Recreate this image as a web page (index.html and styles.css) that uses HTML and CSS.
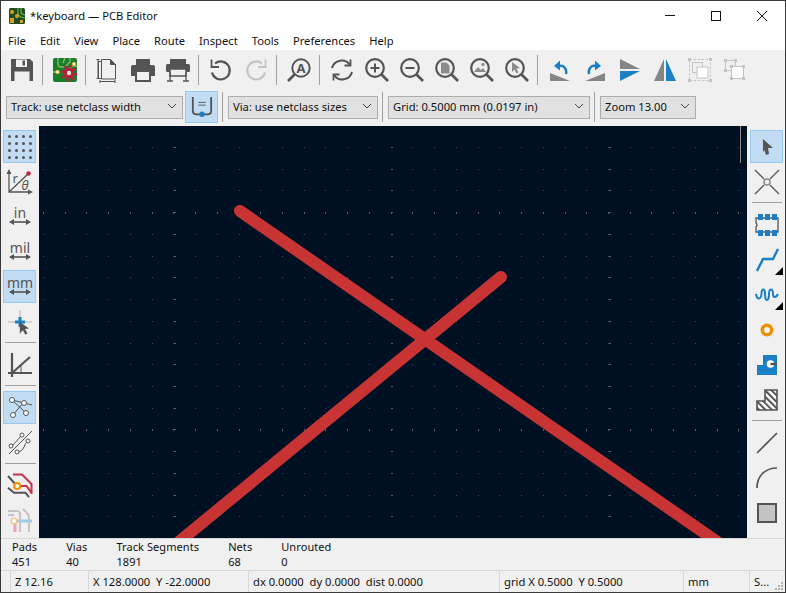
FILE: index.html
```html
<!DOCTYPE html>
<html lang="en">
<head>
  <meta charset="UTF-8">
  <title>*keyboard — PCB Editor</title>
  <link rel="stylesheet" href="styles.css">
</head>
<body>
<div class="window">

  <div class="titlebar">
    <svg class="app-icon" viewBox="0 0 16 16">
      <rect width="16" height="16" rx="1.5" fill="#1f4d1f"/>
      <path d="M9 0v5q0 3 3 4l4 1M12 0v4q0 2 4 3" fill="none" stroke="#66b34d" stroke-width="1.2"/>
      <circle cx="3" cy="4" r="2" fill="#d9a020"/>
      <circle cx="8" cy="8" r="2" fill="#d9a020"/>
      <rect x="1" y="10" width="4" height="5" fill="#d9a020"/>
      <rect x="11" y="12" width="3" height="3" fill="#d9a020"/>
    </svg>
    <span class="title">*keyboard — PCB Editor</span>
    <div class="win-buttons">
      <svg viewBox="0 0 46 29"><path d="M18 14.5h10" stroke="#111" fill="none"/></svg>
      <svg viewBox="0 0 46 29"><rect x="18.500" y="10.500" width="9" height="9" stroke="#111" fill="none"/></svg>
      <svg viewBox="0 0 46 29"><path d="M18 10l10 10M28 10l-10 10" stroke="#111" fill="none"/></svg>
    </div>
  </div>

  <div class="menubar">
    <span>File</span><span>Edit</span><span>View</span><span>Place</span><span>Route</span>
    <span>Inspect</span><span>Tools</span><span>Preferences</span><span>Help</span>
  </div>

  <div class="toolbar">
    <div class="tool"><svg class="icon" viewBox="0 0 24 24"><path d="M1 1h19l3 3v19H1z" fill="#545454"/><rect x="6" y="1.500" width="11" height="7.500" fill="#f0f0f0"/><rect x="12.500" y="2.500" width="2.500" height="5" fill="#545454"/><rect x="4.500" y="13.500" width="15" height="9.500" fill="#f0f0f0"/></svg></div>
    <i class="sep"></i>
    <div class="tool"><svg class="icon" viewBox="0 0 24 24"><rect width="24" height="24" rx="2" fill="#1b7d2c"/><path d="M5 0v6q0 3 3 3h4l5-5V0M0 14h4M12 0l-2 5M24 8h-5l-3 3" fill="none" stroke="#7cc464" stroke-width="1.300"/><circle cx="4.500" cy="14" r="1.800" fill="#fff" stroke="#e9a41e"/><circle cx="21" cy="6" r="1.800" fill="#fff" stroke="#e9a41e"/><circle cx="16" cy="15" r="5.500" fill="#b5213d"/><circle cx="16" cy="15" r="7" fill="none" stroke="#b5213d" stroke-width="2.400" stroke-dasharray="2.700 2.800"/><circle cx="16" cy="15" r="2.200" fill="#d8e8d0"/></svg></div>
    <i class="sep"></i>
    <div class="tool shift-l"><svg class="icon" viewBox="0 0 24 24" fill="none" stroke="#545454"><path d="M7.500 1.500h9l5 5v14.500h-14zM7.500 3.500h-3v17h3"/><path d="M16.500 1.500l5 5h-5z" fill="#545454"/><path d="M2.500 1.500h3M2.500 20.500h3M4 20.500v-19M6 23.500h15M6 22v3M21 22v3" stroke-width="1"/></svg></div>
    <div class="tool"><svg class="icon" viewBox="0 0 24 24"><rect x="5" y="1" width="14" height="6" fill="#545454"/><path d="M0 9q0-2 2-2h20q2 0 2 2v9h-24z" fill="#545454"/><rect x="5" y="13" width="14" height="10" fill="#f0f0f0" stroke="#545454" stroke-width="2"/></svg></div>
    <div class="tool"><svg class="icon" viewBox="0 0 24 24"><rect x="4" y="1" width="16" height="5" fill="#545454"/><rect y="6" width="24" height="8" rx="1.500" fill="#545454"/><rect x="4" y="11" width="16" height="7" fill="#f0f0f0" stroke="#545454" stroke-width="1.500"/><path d="M4 14v9M20 14v9M1 23h6M17 23h6" stroke="#545454" fill="none" stroke-width="1.300"/></svg></div>
    <i class="sep"></i>
    <div class="tool"><svg class="icon" viewBox="0 0 24 24" fill="none" stroke="#545454" stroke-width="2.200"><path d="M6 5.500a9 9 0 1 1-3 9"/><path d="M2.500 1.500v7.500h7.500" stroke-width="1.800"/></svg></div>
    <div class="tool"><svg class="icon" viewBox="0 0 24 24" fill="none" stroke="#c4c4c4" stroke-width="2.200"><path d="M18 5.500a9 9 0 1 0 3 9"/><path d="M21.500 1.500v7.500h-7.500" stroke-width="1.800"/></svg></div>
    <i class="sep"></i>
    <div class="tool"><svg class="icon" viewBox="0 0 24 24"><circle cx="14" cy="10" r="8.700" fill="none" stroke="#545454" stroke-width="2"/><path d="M8 16l-7 7" stroke="#545454" stroke-width="2.600"/><text x="14" y="14.500" class="svg-a">A</text></svg></div>
    <i class="sep"></i>
    <div class="tool"><svg class="icon" viewBox="0 0 24 24" fill="none" stroke="#545454" stroke-width="2"><path d="M2 10a10 10 0 0 1 18-3M22 14a10 10 0 0 1-18 3"/><path d="M20.500 1.500v6h-6M3.500 22.500v-6h6" stroke-width="1.800"/></svg></div>
    <div class="tool"><svg class="icon" viewBox="0 0 24 24"><use href="#lens"/><path d="M10 5.500v9M5.500 10h9" stroke="#545454" stroke-width="2"/></svg></div>
    <div class="tool"><svg class="icon" viewBox="0 0 24 24"><use href="#lens"/><path d="M5.500 10h9" stroke="#545454" stroke-width="2"/></svg></div>
    <div class="tool"><svg class="icon" viewBox="0 0 24 24"><use href="#lens"/><path d="M6 4.500h5.500l3 3v8h-8.500z" fill="#8c8c8c"/></svg></div>
    <div class="tool"><svg class="icon" viewBox="0 0 24 24"><use href="#lens"/><path d="M4 14l4-5 3 3 2-2 3 4z" fill="#8c8c8c"/><circle cx="13" cy="6.500" r="1.700" fill="#8c8c8c"/></svg></div>
    <div class="tool"><svg class="icon" viewBox="0 0 24 24"><use href="#lens"/><path d="M7 4l8 6-3.500.5 2 4-2 1-2-4-2.500 2.500z" fill="#8c8c8c"/></svg></div>
    <i class="sep"></i>
    <div class="tool"><svg class="icon" viewBox="0 0 24 24"><path d="M2 15l20 8h-20z" fill="#858585"/><path d="M18 16c1-5-2-9-7-8" fill="none" stroke="#1a7fc4" stroke-width="2.500"/><path d="M12 2.500l-6 5.500 6 4.500z" fill="#1a7fc4"/></svg></div>
    <div class="tool"><svg class="icon" viewBox="0 0 24 24"><path d="M22 15l-20 8h20z" fill="#858585"/><path d="M6 16c-1-5 2-9 7-8" fill="none" stroke="#1a7fc4" stroke-width="2.500"/><path d="M12 2.500l6 5.500-6 4.500z" fill="#1a7fc4"/></svg></div>
    <div class="tool"><svg class="icon" viewBox="0 0 24 24"><path d="M2 1l20 10h-20z" fill="#858585"/><path d="M2 13h20l-20 10z" fill="#1a7fc4"/></svg></div>
    <div class="tool"><svg class="icon" viewBox="0 0 24 24"><path d="M11 1l-10 22h10z" fill="#858585"/><path d="M13 1l10 22h-10z" fill="#1a7fc4"/></svg></div>
    <div class="tool"><svg class="icon" viewBox="0 0 24 24"><rect x="1.500" y="1.500" width="21" height="21" fill="none" stroke="#c4c4c4" stroke-dasharray="2.500 1.500"/><rect x="0" y="0" width="3" height="3" fill="#c4c4c4"/><rect x="21" y="0" width="3" height="3" fill="#c4c4c4"/><rect x="0" y="21" width="3" height="3" fill="#c4c4c4"/><rect x="21" y="21" width="3" height="3" fill="#c4c4c4"/><rect x="4.500" y="4.500" width="10" height="10" fill="none" stroke="#c4c4c4"/><rect x="9" y="9" width="11" height="11" fill="#fff" stroke="#c4c4c4"/></svg></div>
    <div class="tool"><svg class="icon" viewBox="0 0 24 24"><rect x="2.500" y="2.500" width="10" height="10" fill="none" stroke="#c4c4c4"/><rect x="8.500" y="8.500" width="12" height="12" fill="#fff" stroke="#c4c4c4"/><g fill="#c4c4c4"><rect x="1" y="1" width="3" height="3"/><rect x="11" y="1" width="3" height="3"/><rect x="1" y="11" width="3" height="3"/><rect x="7" y="7" width="3" height="3"/><rect x="19" y="7" width="3" height="3"/><rect x="7" y="19" width="3" height="3"/><rect x="19" y="19" width="3" height="3"/></g></svg></div>
  </div>

  <div class="optionbar">
    <div class="combo track-w">Track: use netclass width<svg viewBox="0 0 10 6"><path d="M1 1l4 4 4-4" fill="none" stroke="#444"/></svg></div>
    <div class="opt-btn"><svg class="icon" viewBox="0 0 24 24"><path d="M2 1v15q0 4 4 4h12q4 0 4-4v-15" fill="none" stroke="#545454" stroke-width="2"/><path d="M8 7h8M8 10h8" stroke="#545454"/><circle cx="12" cy="20" r="3" fill="#1a7fc4"/></svg></div>
    <i class="sep-h"></i>
    <div class="combo via-w">Via: use netclass sizes<svg viewBox="0 0 10 6"><path d="M1 1l4 4 4-4" fill="none" stroke="#444"/></svg></div>
    <i class="sep-h"></i>
    <div class="combo grid-w">Grid: 0.5000 mm (0.0197 in)<svg viewBox="0 0 10 6"><path d="M1 1l4 4 4-4" fill="none" stroke="#444"/></svg></div>
    <i class="sep-h"></i>
    <div class="combo zoom-w">Zoom 13.00<svg viewBox="0 0 10 6"><path d="M1 1l4 4 4-4" fill="none" stroke="#444"/></svg></div>
  </div>

  <div class="workarea">
    <div class="sidebar">
      <div class="tool on"><svg class="icon" viewBox="0 0 24 24"><path d="M1.500 1.500h24M1.500 8.500h24M1.500 15.500h24M1.500 22.500h24" stroke="#545454" stroke-width="3" stroke-linecap="round" stroke-dasharray="0 7" fill="none"/></svg></div>
      <div class="tool"><svg class="icon" viewBox="0 0 24 24"><path d="M1 2v20h22M1 22L20 4" fill="none" stroke="#545454" stroke-width="1.300"/><path d="M1 -1l-2.500 5h5zM25 22l-5-2.500v5z" fill="#545454"/><circle cx="20.500" cy="3.500" r="2.200" fill="#c8203c"/><text x="4.500" y="13" class="svg-small">r</text><text x="13.500" y="20" class="svg-theta">θ</text></svg></div>
      <div class="tool"><svg class="icon" viewBox="0 0 24 24"><text x="12" y="12.500" class="svg-unit">in</text><use href="#unit-arrow"/></svg></div>
      <div class="tool"><svg class="icon" viewBox="0 0 24 24"><text x="12" y="12.500" class="svg-unit">mil</text><use href="#unit-arrow"/></svg></div>
      <div class="tool on"><svg class="icon" viewBox="0 0 24 24"><text x="12" y="12.500" class="svg-unit">mm</text><use href="#unit-arrow"/></svg></div>
      <div class="tool"><svg class="icon" viewBox="0 0 24 24"><path d="M12 0v24M0 12h24" stroke="#b4b4b4"/><path d="M12 7v10M7 12h10" stroke="#1a7fc4" stroke-width="3"/><path d="M12 12l9 6.500-4 .5 2.500 4.500-2.200 1.200-2.300-4.500-3 2.800z" fill="#545454"/></svg></div>
      <i class="sep-v"></i>
      <div class="tool"><svg class="icon" viewBox="0 0 24 24" fill="none" stroke="#545454"><path d="M4 0v24M0 20h24" stroke-width="2.200"/><path d="M4 20l18-16" stroke-width="2.200"/><path d="M13 13v7" stroke-width="1"/></svg></div>
      <i class="sep-v"></i>
      <div class="tool on"><svg class="icon" viewBox="0 0 24 24"><path d="M4 4l20 5M4 4l14 13M15 7L5 19" fill="none" stroke="#545454"/><g fill="#fff" stroke="#545454"><circle cx="4" cy="4" r="2.500"/><circle cx="16" cy="7" r="2.500"/><circle cx="18" cy="17" r="2.500"/><circle cx="5" cy="19" r="2.500"/></g></svg></div>
      <div class="tool"><svg class="icon" viewBox="0 0 24 24"><path d="M1 23L24 0M8 21q6 0 8-5 1-4 4-6M4 15L14 4" fill="none" stroke="#545454"/><g fill="#fff" stroke="#545454"><circle cx="3" cy="15" r="2"/><circle cx="14" cy="4" r="2"/><circle cx="20" cy="10" r="2"/><circle cx="9" cy="21" r="2"/></g></svg></div>
      <i class="sep-v"></i>
      <div class="tool"><svg class="icon" viewBox="0 0 24 24" fill="none" stroke-width="2"><path d="M5 .500h9l9.500 9.500v10M12.500 12h6l5 7" stroke="#c8304c"/><path d="M0 2l9 10M0 13.700l6 5h11.500l3.500 4.500" stroke="#545454"/><circle cx="9.200" cy="12" r="3" fill="#fff" stroke="#f09000" stroke-width="2.200"/></svg></div>
      <div class="tool"><svg class="icon" viewBox="0 0 24 24" fill="none" stroke-width="2"><path d="M0 2h9q3 0 3 3v18" stroke="#c4c4c4"/><path d="M15 0l4 4q2 2 2 5v14M0 6h6" stroke="#c4c4c4"/><path d="M7 12v11" stroke="#e8a6b0" stroke-width="3"/><path d="M8 12h16" stroke="#a0cce8" stroke-width="3"/><circle cx="6" cy="12" r="2.800" fill="#fff" stroke="#f0c890" stroke-width="1.600"/></svg></div>
    </div>

    <svg class="canvas" viewBox="0 0 708 412">
      <path class="dots minor" d="M4 21.500H708M4 43.500H708M4 64.500H708M4 108.500H708M4 130.500H708M4 151.500H708M4 173.500H708M4 195.500H708M4 217.500H708M4 238.500H708M4 260.500H708M4 282.500H708M4 325.500H708M4 347.500H708M4 369.500H708M4 390.500H708"/>
      <path class="dots major-row" d="M4 87H708M4 304H708"/>
      <path class="dots major-col" d="M136 21V412M353 21V412M571 21V412"/>
      <path d="M201 85L690 424M462 151L130 424" stroke="#c83434" stroke-width="12" stroke-linecap="round" fill="none"/>
      <path d="M701.500 0v37" stroke="#8c8c8c"/>
    </svg>

    <div class="sidebar right">
      <div class="tool on"><svg class="icon" viewBox="0 0 24 24"><path d="M8 4L18 13h-5l1 6-3 1-1.500-5-1.500 2z" fill="#545454"/></svg></div>
      <div class="tool"><svg class="icon" viewBox="0 0 24 24"><path d="M0 0l9 9M24 0l-9 9M0 24l9-9M24 24l-9-9" stroke="#545454" stroke-width="1.300"/><circle cx="12" cy="12" r="3" fill="none" stroke="#8c8c8c" stroke-width="1.500"/></svg></div>
      <i class="sep-v"></i>
      <div class="tool"><svg class="icon" viewBox="0 0 24 24"><path d="M1 5h22v14h-22v-5q2-2 0-4z" fill="#f0f0f0" stroke="#545454" stroke-width="1.300"/><g fill="#1a7fc4"><rect x="3" y="1" width="5" height="6"/><rect x="10" y="1" width="5" height="6"/><rect x="17" y="1" width="5" height="6"/><rect x="3" y="17" width="5" height="6"/><rect x="10" y="17" width="5" height="6"/><rect x="17" y="17" width="5" height="6"/></g></svg></div>
      <div class="tool has-menu"><svg class="icon" viewBox="0 0 24 24"><path d="M2 23l6-12h10l5-10" fill="none" stroke="#1a7fc4" stroke-width="2.400"/></svg></div>
      <div class="tool has-menu"><svg class="icon" viewBox="0 0 24 24"><path d="M1 11C2 17 6 17 6.500 11 6.500 5 10 5 10 11 10 19 14 19 14 11 14 5 18 5 18 11 18 15 21 15 23 11" fill="none" stroke="#1a7fc4" stroke-width="2"/></svg></div>
      <div class="tool"><svg class="icon" viewBox="0 0 24 24"><circle cx="12" cy="12" r="4.700" fill="#fff" stroke="#f09000" stroke-width="3.600"/></svg></div>
      <div class="tool"><svg class="icon" viewBox="0 0 24 24"><path d="M8 2h14v20h-20v-10h6z" fill="#1a7fc4"/><circle cx="15.500" cy="11" r="3.800" fill="#fff"/><path d="M15.500 11h6.500" stroke="#545454" stroke-width="2.400"/></svg></div>
      <div class="tool"><svg class="icon" viewBox="0 0 24 24"><defs><pattern id="hatch" width="4.500" height="4.500" patternUnits="userSpaceOnUse" patternTransform="rotate(-45)"><rect width="2" height="4.500" fill="#545454"/></pattern></defs><path d="M10 2h12v20h-20v-9h8z" fill="#fff"/><path d="M10 2h12v20h-20v-9h8z" fill="url(#hatch)" stroke="#545454" stroke-width="1.600"/></svg></div>
      <i class="sep-v"></i>
      <div class="tool"><svg class="icon" viewBox="0 0 24 24"><path d="M2 22L22 2" stroke="#545454" stroke-width="1.700"/></svg></div>
      <div class="tool"><svg class="icon" viewBox="0 0 24 24"><path d="M2 22C2 10 10 2 22 2" fill="none" stroke="#545454" stroke-width="1.700"/></svg></div>
      <div class="tool"><svg class="icon" viewBox="0 0 24 24"><rect x="3" y="3" width="18" height="18" fill="#c4c4c4" stroke="#545454" stroke-width="2"/></svg></div>
    </div>
  </div>

  <div class="msgpanel">
    <div><div>Pads</div><div>451</div></div>
    <div><div>Vias</div><div>40</div></div>
    <div><div>Track Segments</div><div>1891</div></div>
    <div><div>Nets</div><div>68</div></div>
    <div><div>Unrouted</div><div>0</div></div>
  </div>

  <div class="statusbar">
    <div class="cell z-cell">Z 12.16</div>
    <div class="cell pos-cell">X 128.0000&nbsp; Y -22.0000</div>
    <div class="cell delta-cell">dx 0.0000&nbsp; dy 0.0000&nbsp; dist 0.0000</div>
    <div class="cell grid-cell">grid X 0.5000&nbsp; Y 0.5000</div>
    <div class="cell unit-cell">mm</div>
    <div class="cell last-cell">S...</div>
    <svg class="grip" viewBox="0 0 10 10" fill="#b4b4b4"><rect x="7" y="1" width="2" height="2"/><rect x="4" y="4" width="2" height="2"/><rect x="7" y="4" width="2" height="2"/><rect x="1" y="7" width="2" height="2"/><rect x="4" y="7" width="2" height="2"/><rect x="7" y="7" width="2" height="2"/></svg>
  </div>

</div>

<svg class="sprites" width="0" height="0">
  <defs>
    <g id="lens" fill="none" stroke="#545454"><circle cx="10" cy="10" r="8.800" stroke-width="2.200"/><path d="M16 16l7 7" stroke-width="2.600"/></g>
    <g id="unit-arrow"><path d="M3 17h18" stroke="#545454" stroke-width="1.600"/><path d="M1 17l5-3v6zM23 17l-5-3v6z" fill="#545454"/></g>
  </defs>
</svg>
</body>
</html>
```

FILE: styles.css
```css
* {
  box-sizing: border-box;
}
body {
  margin: 0;
  font-family: "Noto Sans", Arial, sans-serif;
  font-size: 11.2px;
  color: #111;
  background-color: #f0f0f0;
}
.window {
  width: 786px;
  height: 593px;
  border: 1px solid #3a3a3a;
  display: flex;
  flex-direction: column;
  overflow: hidden;
}

/* title and menu */
.titlebar {
  height: 29px;
  background-color: #fff;
  display: flex;
  align-items: center;
  padding-left: 8px;
}
.app-icon {
  width: 16px;
  height: 16px;
}
.title {
  margin-left: 5px;
}
.win-buttons {
  margin-left: auto;
  display: flex;
}
.win-buttons svg {
  width: 46px;
  height: 29px;
}
.menubar {
  height: 20px;
  background-color: #fff;
  display: flex;
  align-items: center;
  padding-left: 7px;
  gap: 14px;
}

/* toolbars */
.icon {
  width: 24px;
  height: 24px;
  display: block;
  overflow: visible;
}
.tool {
  width: 35px;
  height: 35px;
  flex: none;
  display: flex;
  align-items: center;
  justify-content: center;
  position: relative;
}
.shift-l .icon {
  margin-right: 3px;
}
.toolbar {
  height: 40px;
  display: flex;
  align-items: center;
  padding-left: 3px;
}
.sep {
  width: 1px;
  height: 30px;
  margin: 0 4px 0 3px;
  background-color: #a0a0a0;
  flex: none;
}
.optionbar {
  height: 36px;
  display: flex;
  align-items: center;
  padding: 0 0 2px 5px;
}
.combo {
  height: 23px;
  background-color: #e1e1e1;
  border: 1px solid #adadad;
  display: flex;
  align-items: center;
  justify-content: space-between;
  padding: 0 4px 2px;
  white-space: nowrap;
  flex: none;
}
.combo svg {
  width: 10px;
  height: 6px;
  margin-right: 1px;
}
.track-w { width: 177px; }
.via-w { width: 150px; }
.grid-w { width: 202px; }
.zoom-w { width: 96px; }
.opt-btn {
  width: 33px;
  height: 32px;
  margin-left: 2px;
  background-color: #c2dcf3;
  border: 1px solid #99c9ef;
  display: flex;
  align-items: center;
  justify-content: center;
}
.opt-btn .icon {
  width: 22px;
  height: 22px;
}
.sep-h {
  width: 1px;
  height: 30px;
  margin: 0 5px 0 4px;
  background-color: #a0a0a0;
  flex: none;
}

/* main area */
.workarea {
  flex: 1;
  display: flex;
  min-height: 0;
}
.sidebar {
  width: 38px;
  flex: none;
  padding: 3px 0 0 1px;
  display: flex;
  flex-direction: column;
}
.sidebar.right {
  width: 38px;
  padding-left: 2px;
}
.sidebar .tool.on::before {
  content: "";
  position: absolute;
  inset: 1px;
  background-color: #c2dcf3;
  border: 1px solid #99c9ef;
}
.sidebar .tool .icon {
  position: relative;
}
.has-menu::after {
  content: "";
  position: absolute;
  right: 1px;
  bottom: 2px;
  border-style: solid;
  border-width: 0 0 8px 8px;
  border-color: transparent transparent #000 transparent;
}
.sep-v {
  height: 1px;
  margin: 3px 3px 4px 3px;
  background-color: #a0a0a0;
  flex: none;
}
.canvas {
  width: 708px;
  height: 412px;
  flex: none;
  background-color: #001023;
  display: block;
}
.dots {
  fill: none;
  shape-rendering: crispEdges;
  stroke-dasharray: 1 20.73;
}
.minor {
  stroke: #3e4b59;
  stroke-width: 1;
}
.major-row {
  stroke: #56626f;
  stroke-width: 2;
}
.major-col {
  stroke: #56626f;
  stroke-width: 2;
}
.sprites {
  position: absolute;
}
.svg-a {
  font-size: 13px;
  font-weight: bold;
  fill: #545454;
  text-anchor: middle;
}
.svg-small {
  font-size: 13px;
  fill: #545454;
}
.svg-theta {
  font-size: 13px;
  font-style: italic;
  fill: #545454;
}
.svg-unit {
  font-size: 14px;
  fill: #545454;
  text-anchor: middle;
}

/* bottom panels */
.msgpanel {
  height: 33px;
  border-top: 1px solid #d8d8d8;
  border-bottom: 1px solid #d8d8d8;
  display: flex;
  gap: 29px;
  padding: 0 0 0 11px;
  font-size: 11px;
  letter-spacing: 0.08px;
  line-height: 15px;
}
.statusbar {
  height: 21px;
  display: flex;
  padding-left: 9px;
  position: relative;
}
.cell {
  border-left: 1px solid #d8d8d8;
  padding-left: 4px;
  line-height: 21px;
  white-space: nowrap;
  flex: none;
}
.z-cell { width: 78px; }
.pos-cell { width: 160px; }
.delta-cell { width: 251px; }
.grid-cell { width: 184px; }
.unit-cell { width: 66px; }
.last-cell { width: 30px; }
.grip {
  position: absolute;
  right: 1px;
  bottom: 1px;
  width: 10px;
  height: 10px;
}
```
